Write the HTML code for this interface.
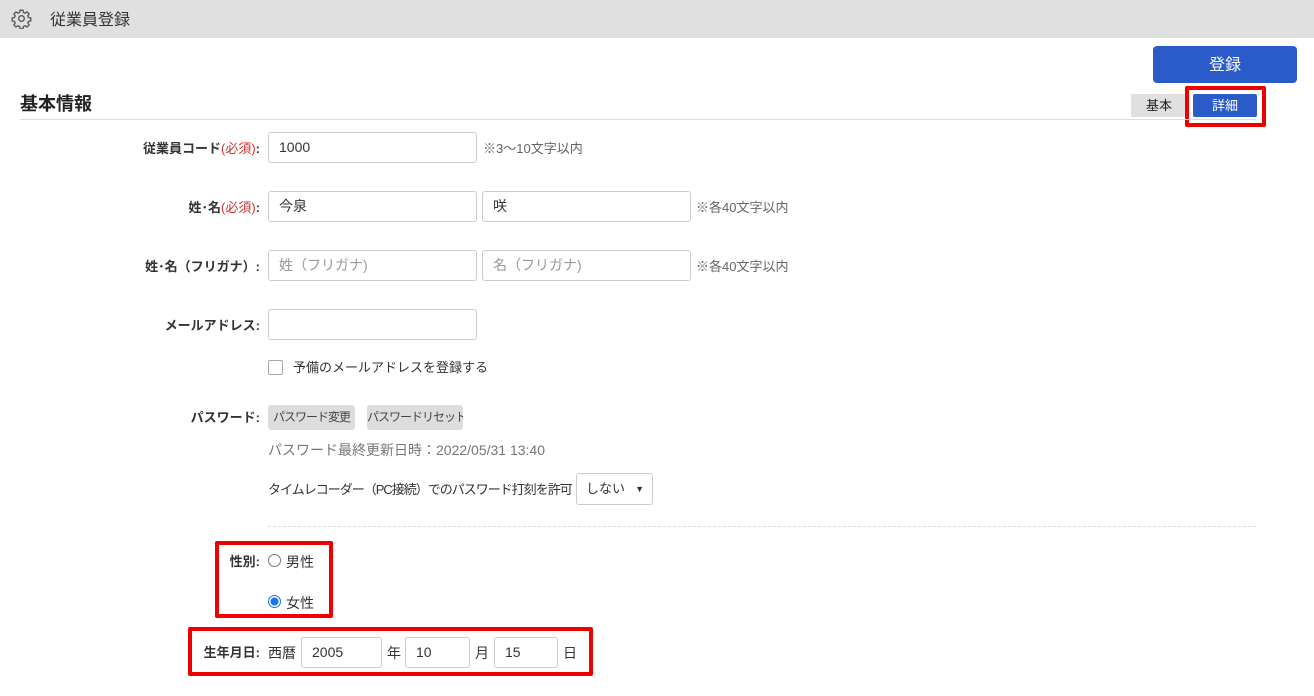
<!DOCTYPE html>
<html><head><meta charset="utf-8"><style>
*{box-sizing:border-box;margin:0;padding:0}
body{width:1314px;height:696px;background:#fff;position:relative;overflow:hidden;font-family:"Liberation Sans","Noto Sans CJK JP",sans-serif;font-size:14px;color:#333}
.a{position:absolute;white-space:nowrap}
.hdr{left:0;top:0;width:1314px;height:38px;background:#e0e0e0}
.inp{position:absolute;height:31px;border:1px solid #ccc;border-radius:3px;background:#fff;padding-left:10px;line-height:29px;font-size:14px;color:#333}
.ph{color:#999}
.lbl{position:absolute;right:1054px;font-weight:bold;font-size:13px;color:#333;white-space:nowrap;line-height:18px}
.note{color:#666;font-size:13px;line-height:18px}
.red{position:absolute;border:4px solid #e00;border-radius:2px}
.btn{position:absolute;background:#ddd;border-radius:3px;font-size:12px;letter-spacing:-1px;color:#444;text-align:center;line-height:25px;height:25px;white-space:nowrap;overflow:hidden}
</style></head><body>
<div class="a hdr"></div>
<svg class="a" style="left:11px;top:8px" width="21" height="21" viewBox="0 0 24 24" fill="none" stroke="#555" stroke-width="1.5"><circle cx="12" cy="12" r="3.2"/><path d="M10.3 2.5h3.4l.5 2.6 1.9.8 2.2-1.5 2.4 2.4-1.5 2.2.8 1.9 2.6.5v3.4l-2.6.5-.8 1.9 1.5 2.2-2.4 2.4-2.2-1.5-1.9.8-.5 2.6h-3.4l-.5-2.6-1.9-.8-2.2 1.5-2.4-2.4 1.5-2.2-.8-1.9-2.6-.5v-3.4l2.6-.5.8-1.9-1.5-2.2 2.4-2.4 2.2 1.5 1.9-.8z"/></svg>
<div class="a" style="left:50px;top:9px;font-size:16px;color:#333;line-height:24px">従業員登録</div>
<div class="a" style="left:1153px;top:46px;width:144px;height:37px;background:#2b5bc8;border-radius:4px;color:#fff;font-size:16px;text-align:center;line-height:40px">登録</div>
<div class="a" style="left:1131px;top:94px;width:56px;height:23px;background:#e0e0e0;font-size:13px;text-align:center;line-height:23px;color:#222">基本</div>
<div class="a" style="left:1193px;top:94px;width:64px;height:23px;background:#2b5bc8;font-size:13px;text-align:center;line-height:23px;color:#fff;border-radius:2px">詳細</div>
<div class="red" style="left:1185px;top:86px;width:81px;height:41px"></div>
<div class="a" style="left:20px;top:91px;font-size:18px;font-weight:bold;color:#222;line-height:26px">基本情報</div>
<div class="a" style="left:20px;top:119px;width:1236px;height:1px;background:#ddd"></div>

<div class="lbl" style="top:140px">従業員コード<span style="color:#c33;font-weight:normal">(必須)</span>:</div>
<div class="inp" style="left:268px;top:132px;width:209px">1000</div>
<div class="a note" style="left:483px;top:140px">※3〜10文字以内</div>

<div class="lbl" style="top:199px">姓･名<span style="color:#c33;font-weight:normal">(必須)</span>:</div>
<div class="inp" style="left:268px;top:191px;width:209px">今泉</div>
<div class="inp" style="left:482px;top:191px;width:209px">咲</div>
<div class="a note" style="left:696px;top:199px">※各40文字以内</div>

<div class="lbl" style="top:258px">姓･名（フリガナ）:</div>
<div class="inp ph" style="left:268px;top:250px;width:209px">姓（フリガナ)</div>
<div class="inp ph" style="left:482px;top:250px;width:209px">名（フリガナ)</div>
<div class="a note" style="left:696px;top:258px">※各40文字以内</div>

<div class="lbl" style="top:317px">メールアドレス:</div>
<div class="inp" style="left:268px;top:309px;width:209px"></div>
<div class="a" style="left:268px;top:360px;width:15px;height:15px;border:1px solid #aaa;border-radius:2px"></div>
<div class="a" style="left:293px;top:359px;font-size:13px;line-height:18px">予備のメールアドレスを登録する</div>

<div class="lbl" style="top:409px">パスワード:</div>
<div class="btn" style="left:268px;top:405px;width:87px">パスワード変更</div>
<div class="btn" style="left:367px;top:405px;width:96px">パスワードリセット</div>
<div class="a note" style="left:268px;top:440px;color:#777;font-size:14px;line-height:20px">パスワード最終更新日時：2022/05/31 13:40</div>
<div class="a" style="left:268px;top:481px;font-size:13px;line-height:18px;letter-spacing:-1px">タイムレコーダー（PC接続）でのパスワード打刻を許可</div>
<div class="a" style="left:576px;top:473px;width:77px;height:32px;border:1px solid #ccc;border-radius:3px;font-size:13px;line-height:30px;padding-left:9px;background:#fff">しない<span style="position:absolute;right:8px;top:0;font-size:9px">▼</span></div>
<div class="a" style="left:268px;top:526px;width:988px;border-top:1px dashed #ddd"></div>

<div class="lbl" style="top:553px">性別:</div>
<div class="a" style="left:268px;top:554px;width:13px;height:13px;border:1px solid #777;border-radius:50%"></div>
<div class="a" style="left:286px;top:552px;font-size:14px;line-height:20px">男性</div>
<div class="a" style="left:268px;top:595px;width:13px;height:13px;border:1px solid #1a73e8;border-radius:50%;background:radial-gradient(circle,#1a73e8 3.5px,#fff 4.5px)"></div>
<div class="a" style="left:286px;top:593px;font-size:14px;line-height:20px">女性</div>
<div class="red" style="left:215px;top:541px;width:118px;height:77px"></div>

<div class="lbl" style="top:644px">生年月日:</div>
<div class="a" style="left:268px;top:643px;font-size:14px;line-height:20px">西暦</div>
<div class="inp" style="left:301px;top:637px;width:81px">2005</div>
<div class="a" style="left:387px;top:643px;line-height:20px">年</div>
<div class="inp" style="left:405px;top:637px;width:65px">10</div>
<div class="a" style="left:475px;top:643px;line-height:20px">月</div>
<div class="inp" style="left:494px;top:637px;width:64px">15</div>
<div class="a" style="left:563px;top:643px;line-height:20px">日</div>
<div class="red" style="left:188px;top:627px;width:405px;height:49px"></div>
</body></html>
